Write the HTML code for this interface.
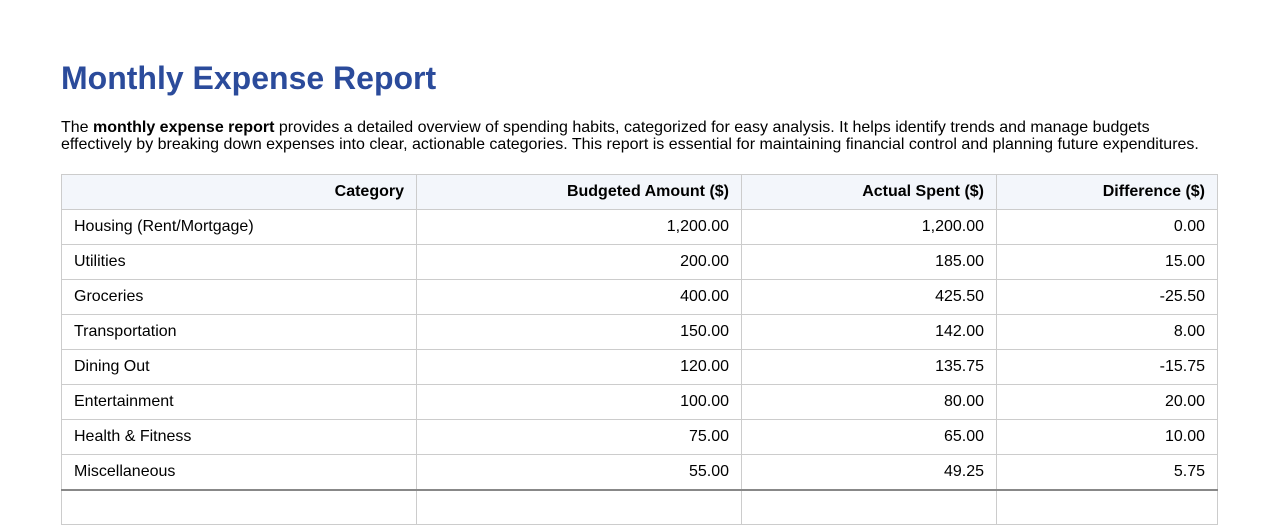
<!DOCTYPE html>
<html><head><meta charset="utf-8"><style>
body{margin:0;background:#fff;font-family:"Liberation Sans",Arial,sans-serif;color:#000;width:1278px;height:501px;overflow:hidden}
h1{position:absolute;left:61px;top:59px;margin:0;font-size:32px;font-weight:bold;color:#2b4b9b;line-height:38px}
p{position:absolute;left:61px;top:119px;margin:0;width:1150px;font-size:16px;line-height:17px}
table{position:absolute;left:61px;top:174px;border-collapse:collapse;font-size:16px}
td,th{border:1px solid #ccc;height:35px;padding:0 12px;text-align:right;box-sizing:border-box}
th{background:#f3f6fb;font-weight:bold}
td:first-child{text-align:left}
tr.last td{border-bottom:2px solid #888}
</style></head><body>
<h1>Monthly Expense Report</h1>
<p>The <b>monthly expense report</b> provides a detailed overview of spending habits, categorized for easy analysis. It helps identify trends and manage budgets effectively by breaking down expenses into clear, actionable categories. This report is essential for maintaining financial control and planning future expenditures.</p>
<table>
<tr><th style="width:355px">Category</th><th style="width:325px">Budgeted Amount ($)</th><th style="width:255px">Actual Spent ($)</th><th style="width:221px">Difference ($)</th></tr>
<tr><td>Housing (Rent/Mortgage)</td><td>1,200.00</td><td>1,200.00</td><td>0.00</td></tr>
<tr><td>Utilities</td><td>200.00</td><td>185.00</td><td>15.00</td></tr>
<tr><td>Groceries</td><td>400.00</td><td>425.50</td><td>-25.50</td></tr>
<tr><td>Transportation</td><td>150.00</td><td>142.00</td><td>8.00</td></tr>
<tr><td>Dining Out</td><td>120.00</td><td>135.75</td><td>-15.75</td></tr>
<tr><td>Entertainment</td><td>100.00</td><td>80.00</td><td>20.00</td></tr>
<tr><td>Health &amp; Fitness</td><td>75.00</td><td>65.00</td><td>10.00</td></tr>
<tr class="last"><td>Miscellaneous</td><td>55.00</td><td>49.25</td><td>5.75</td></tr>
<tr><td>&nbsp;</td><td></td><td></td><td></td></tr>
</table>
</body></html>
